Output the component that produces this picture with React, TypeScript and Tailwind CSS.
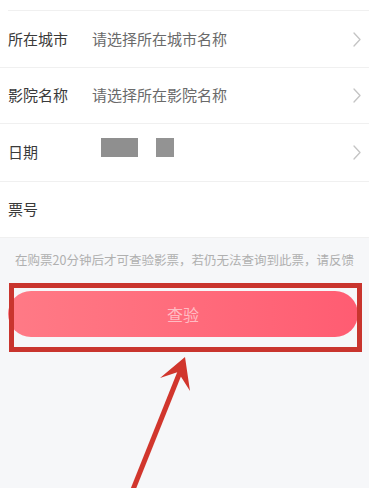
import React from 'react';

const font = { fontFamily: '"Noto Sans CJK SC", "Noto Sans", sans-serif' };

const Chevron: React.FC = () => (
  <svg width="8" height="15" viewBox="0 0 8 15" fill="none" className="shrink-0">
    <path d="M1 1l6 6.5L1 14" stroke="#c4c4c4" strokeWidth="1.3" strokeLinecap="round" strokeLinejoin="round" />
  </svg>
);

interface RowProps {
  label: string;
  children?: React.ReactNode;
  arrow?: boolean;
  height: string;
}

const Row: React.FC<RowProps> = ({ label, children, arrow, height }) => (
  <div className={`flex items-center pl-2 pr-2 border-b border-[#f0f0f0] ${height}`}>
    <span className="w-[84px] shrink-0 text-[15px] text-[#3a3a3a]">{label}</span>
    <div className="flex-1 flex items-center">{children}</div>
    {arrow && <Chevron />}
  </div>
);

const App: React.FC = () => {
  return (
    <div className="relative w-[369px] h-[488px] bg-[#f6f7f9] overflow-hidden" style={font}>
      {/* Form */}
      <div className="bg-white">
        <div className="h-[11px] ml-2 border-b border-[#f0f0f0]" />
        <Row label="所在城市" arrow height="h-[57px]">
          <span className="text-[15px] text-[#6a6a6a]">请选择所在城市名称</span>
        </Row>
        <Row label="影院名称" arrow height="h-[56px]">
          <span className="text-[15px] text-[#6a6a6a]">请选择所在影院名称</span>
        </Row>
        <Row label="日期" arrow height="h-[58px]">
          <div className="flex items-center gap-[18px] ml-[9px] -mt-[11px]">
            <div className="w-[37px] h-[19px] bg-[#8f8f8f]" />
            <div className="w-[18px] h-[19px] bg-[#939393]" />
          </div>
        </Row>
        <Row label="票号" height="h-[56px]" />
      </div>

      {/* Hint */}
      <p className="mt-[13px] text-center text-[12.5px] text-[#b0b0b0]">
        在购票20分钟后才可查验影票，若仍无法查询到此票，请反馈
      </p>

      {/* Button */}
      <div className="mt-[21px] px-2">
        <button className="w-[350px] h-[46px] rounded-full bg-gradient-to-r from-[#ff7a86] to-[#ff5c72] text-[16px] text-[#ffbcc3]">
          查验
        </button>
      </div>

      {/* Annotation box */}
      <div className="absolute left-[9px] top-[283px] w-[353px] h-[69px] border-[5px] border-[#c9352e]" />

      {/* Annotation arrow */}
      <svg className="absolute left-0 top-0" width="369" height="488" viewBox="0 0 369 488">
        <line x1="132" y1="492" x2="180" y2="372" stroke="#d1362d" strokeWidth="5" />
        <path d="M185 357 L160 378 L178 372 L190 391 Z" fill="#d1362d" />
      </svg>
    </div>
  );
};

export default App;
